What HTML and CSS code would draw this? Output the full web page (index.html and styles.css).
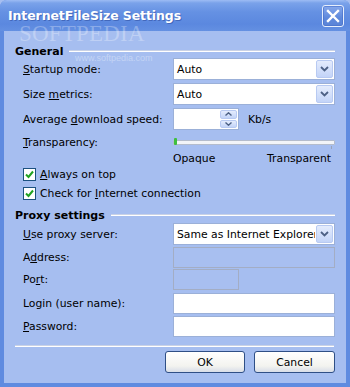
FILE: index.html
```html
<!DOCTYPE html>
<html>
<head>
<meta charset="utf-8">
<link rel="stylesheet" href="styles.css">
</head>
<body>
<div class="window">
  <div class="titlebar">
    <span class="title">InternetFileSize Settings</span>
    <span class="close"><svg width="14" height="14" viewBox="0 0 14 14"><path d="M2 2 L12 12 M12 2 L2 12" stroke="#fff" stroke-width="2.4" stroke-linecap="square"/></svg></span>
  </div>
  <div class="client">
    <div class="watermark">SOFTPEDIA</div>
    <div class="watermark-small">www.softpedia.com</div>

    <div class="section-head head-general"><span>General</span><i class="rule"></i></div>
    <div class="rows">
      <div class="row r-startup">
        <label><u>S</u>tartup mode:</label>
        <div class="combo"><span class="val">Auto</span><span class="drop"><svg width="9" height="6" viewBox="0 0 9 6"><path d="M1 1 L4.5 4.5 L8 1" fill="none" stroke="#4d6185" stroke-width="1.8"/></svg></span></div>
      </div>
      <div class="row r-metrics">
        <label>Size <u>m</u>etrics:</label>
        <div class="combo"><span class="val">Auto</span><span class="drop"><svg width="9" height="6" viewBox="0 0 9 6"><path d="M1 1 L4.5 4.5 L8 1" fill="none" stroke="#4d6185" stroke-width="1.8"/></svg></span></div>
      </div>
      <div class="row r-speed">
        <label>Average <u>d</u>ownload speed:</label>
        <div class="speed">
          <div class="spinbox"><span class="spin"><span class="half"><svg width="7" height="4" viewBox="0 0 7 4"><path d="M0.5 3.5 L3.5 0.8 L6.5 3.5" fill="none" stroke="#4d6185" stroke-width="1.4"/></svg></span><span class="half"><svg width="7" height="4" viewBox="0 0 7 4"><path d="M0.5 0.5 L3.5 3.2 L6.5 0.5" fill="none" stroke="#4d6185" stroke-width="1.4"/></svg></span></span></div>
          <span class="unit">Kb/s</span>
        </div>
      </div>
      <div class="row r-trans">
        <label><u>T</u>ransparency:</label>
        <div class="slider"><span class="track"></span><span class="thumb"></span><span class="tick"></span></div>
      </div>
      <div class="row r-scale">
        <span></span>
        <div class="scale"><span>Opaque</span><span>Transparent</span></div>
      </div>
      <div class="check c1"><span class="box"><svg width="9" height="9" viewBox="0 0 9 9"><path d="M1 4.5 L3.5 7 L8 1.5" fill="none" stroke="#21a121" stroke-width="2"/></svg></span><span><u>A</u>lways on top</span></div>
      <div class="check c2"><span class="box"><svg width="9" height="9" viewBox="0 0 9 9"><path d="M1 4.5 L3.5 7 L8 1.5" fill="none" stroke="#21a121" stroke-width="2"/></svg></span><span>Check for <u>I</u>nternet connection</span></div>
    </div>

    <div class="section-head head-proxy"><span>Proxy settings</span><i class="rule"></i></div>
    <div class="rows">
      <div class="row r-proxy">
        <label><u>U</u>se proxy server:</label>
        <div class="combo"><span class="val">Same as Internet Explorer</span><span class="drop"><svg width="9" height="6" viewBox="0 0 9 6"><path d="M1 1 L4.5 4.5 L8 1" fill="none" stroke="#4d6185" stroke-width="1.8"/></svg></span></div>
      </div>
      <div class="row r-address">
        <label>A<u>d</u>dress:</label>
        <div class="field disabled"></div>
      </div>
      <div class="row r-port">
        <label>Po<u>r</u>t:</label>
        <div class="field disabled short"></div>
      </div>
      <div class="row r-login">
        <label>Login (user name):</label>
        <div class="field"></div>
      </div>
      <div class="row r-pass">
        <label><u>P</u>assword:</label>
        <div class="field"></div>
      </div>
    </div>

    <div class="separator"></div>
    <div class="buttons">
      <button class="btn ok">OK</button>
      <button class="btn cancel">Cancel</button>
    </div>
  </div>
</div>
</body>
</html>
```

FILE: styles.css
```css
* { box-sizing: border-box; }
html, body { margin: 0; padding: 0; }
body {
  width: 350px;
  height: 387px;
  overflow: hidden;
  background: #a6bef0;
  font-family: "DejaVu Sans", Tahoma, sans-serif;
  font-size: 10.8px;
  color: #000;
}
.window {
  width: 350px;
  height: 387px;
  display: flex;
  flex-direction: column;
  background: #5f8be0;
  border-radius: 7px 7px 0 0;
  overflow: hidden;
}
.titlebar {
  height: 31px;
  flex: none;
  display: flex;
  align-items: center;
  justify-content: space-between;
  padding: 0 6px 0 8px;
  background: linear-gradient(#9dbcf4 0, #7aa2ea 3px, #6591e3 12px, #5b88df 24px, #6490e2 31px);
}
.title {
  color: #fff;
  font-weight: bold;
  font-size: 12.5px;
  letter-spacing: -0.1px;
  text-shadow: 1px 1px 0 rgba(40, 70, 150, 0.5);
}
.close {
  width: 22px;
  height: 22px;
  border: 1px solid #e6eefc;
  border-radius: 3px;
  background: linear-gradient(#86a8ec, #5f89dc 60%, #5a84d8);
  display: flex;
  align-items: center;
  justify-content: center;
  box-shadow: inset 0 0 0 1px rgba(70, 110, 200, 0.6);
}
.client {
  position: relative;
  flex: 1;
  margin: 0 4px 4px 4px;
  background: #a6bef0;
  padding: 0 11px;
  display: flex;
  flex-direction: column;
}
.watermark {
  position: absolute;
  left: 15px;
  top: -6px;
  font-family: "Liberation Serif", serif;
  font-size: 23px;
  line-height: 18px;
  letter-spacing: 0.2px;
  color: rgba(255, 255, 255, 0.28);
  pointer-events: none;
}
.watermark-small {
  position: absolute;
  left: 71px;
  top: 22px;
  font-family: "Liberation Sans", sans-serif;
  font-size: 9px;
  line-height: 10px;
  color: rgba(255, 255, 255, 0.35);
}
.section-head {
  height: 14px;
  display: flex;
  align-items: center;
  font-weight: bold;
  font-size: 11px;
}
.head-general { margin-top: 13px; }
.head-proxy { margin-top: 8px; }
.rule {
  flex: 1;
  height: 2px;
  margin-left: 6px;
  border-top: 1px solid #c9d2e6;
  border-bottom: 1px solid #ffffff;
}
.rows {
  padding-left: 8px;
  display: flex;
  flex-direction: column;
}
.row {
  display: grid;
  grid-template-columns: 150px 1fr;
  align-items: center;
}
.row label { white-space: nowrap; }
.r-startup { height: 22px; margin-top: 0; }
.r-metrics { height: 22px; margin-top: 3px; }
.r-speed { height: 22px; margin-top: 3px; }
.r-trans { height: 14px; margin-top: 5px; }
.r-scale { height: 14px; margin-top: 2px; }
.combo {
  height: 22px;
  background: #fff;
  border: 1px solid #9bb0d8;
  display: flex;
  align-items: stretch;
  overflow: hidden;
}
.combo .val {
  flex: 1;
  padding-left: 3px;
  display: flex;
  align-items: center;
  white-space: nowrap;
  overflow: hidden;
}
.drop {
  width: 17px;
  margin: 1px;
  flex: none;
  border: 1px solid #b8caf2;
  border-radius: 2px;
  background: linear-gradient(#e4ecfd, #c3d4f8);
  display: flex;
  align-items: center;
  justify-content: center;
}
.speed { display: flex; align-items: center; }
.spinbox {
  width: 66px;
  height: 22px;
  background: #fff;
  border: 1px solid #9bb0d8;
  display: flex;
  justify-content: flex-end;
  padding: 1px;
}
.spin {
  width: 17px;
  display: flex;
  flex-direction: column;
  gap: 1px;
}
.half {
  flex: 1;
  border: 1px solid #b8caf2;
  border-radius: 2px;
  background: linear-gradient(#e4ecfd, #c3d4f8);
  display: flex;
  align-items: center;
  justify-content: center;
}
.unit { margin-left: 9px; }
.slider {
  position: relative;
  height: 14px;
  display: flex;
  align-items: center;
}
.track {
  flex: 1;
  height: 5px;
  border: 1px solid #b4bccc;
  background: #f2f4f8;
  border-radius: 1px;
}
.thumb {
  position: absolute;
  left: 1px;
  top: 3px;
  width: 3px;
  height: 7px;
  background: #3fbf3f;
  border-radius: 1px;
}
.tick {
  position: absolute;
  right: 3px;
  top: 11px;
  width: 1px;
  height: 3px;
  background: #9aa4b8;
}
.scale {
  display: flex;
  justify-content: space-between;
  padding-right: 4px;
}
.check {
  display: flex;
  align-items: center;
  gap: 4px;
  height: 14px;
}
.c1 { margin-top: 2px; }
.c2 { margin-top: 5px; }
.box {
  width: 13px;
  height: 13px;
  background: #fff;
  border: 1px solid #1c5180;
  display: flex;
  align-items: center;
  justify-content: center;
}
.r-proxy { height: 22px; margin-top: 1px; }
.r-address { height: 21px; margin-top: 2px; }
.r-port { height: 21px; margin-top: 1px; }
.r-login { height: 21px; margin-top: 3px; }
.r-pass { height: 21px; margin-top: 2px; }
.field {
  height: 21px;
  background: #fff;
  border: 1px solid #9bb0d8;
}
.field.disabled {
  background: #a8bff0;
  border-color: #a3adc4;
}
.field.short { width: 66px; }
.separator {
  margin-top: 8px;
  height: 2px;
  margin-right: 1px;
  border-top: 1px solid #c9d2e6;
  border-bottom: 1px solid #ffffff;
}
.buttons {
  margin-top: 4px;
  display: flex;
  justify-content: flex-end;
  gap: 9px;
}
.btn {
  height: 22px;
  font-family: inherit;
  font-size: 10.8px;
  color: #000;
  border: 1px solid #2f4f86;
  border-radius: 3px;
  background: linear-gradient(#ffffff, #f3f3ef 70%, #d8dde8);
  padding: 0;
}
.ok { width: 80px; }
.cancel { width: 81px; }
```
